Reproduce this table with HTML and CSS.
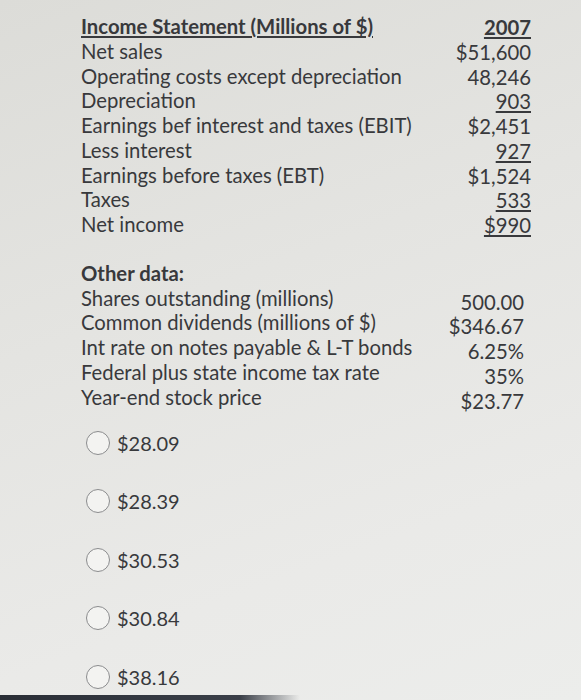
FILE: index.html
```html
<!DOCTYPE html>
<html>
<head>
<meta charset="utf-8">
<link rel="stylesheet" href="styles.css">
</head>
<body>
<div class="page">
  <section class="block">
    <div class="labels">
      <div class="b u">Income Statement (Millions of $)</div>
      <div>Net sales</div>
      <div>Operating costs except depreciation</div>
      <div>Depreciation</div>
      <div>Earnings bef interest and taxes (EBIT)</div>
      <div>Less interest</div>
      <div>Earnings before taxes (EBT)</div>
      <div>Taxes</div>
      <div>Net income</div>
    </div>
    <div class="values v1">
      <div><span class="b u">2007</span></div>
      <div>$51,600</div>
      <div>48,246</div>
      <div><span class="u">903</span></div>
      <div>$2,451</div>
      <div><span class="u">927</span></div>
      <div>$1,524</div>
      <div><span class="u">533</span></div>
      <div><span class="u">$990</span></div>
    </div>
  </section>

  <section class="block other">
    <div class="labels">
      <div class="b">Other data:</div>
      <div>Shares outstanding (millions)</div>
      <div>Common dividends (millions of $)</div>
      <div>Int rate on notes payable &amp; L-T bonds</div>
      <div>Federal plus state income tax rate</div>
      <div>Year-end stock price</div>
    </div>
    <div class="values v2">
      <div>&nbsp;</div>
      <div>500.00</div>
      <div>$346.67</div>
      <div>6.25%</div>
      <div>35%</div>
      <div>$23.77</div>
    </div>
  </section>

  <ul class="options">
    <li><span class="radio"></span><span>$28.09</span></li>
    <li><span class="radio"></span><span>$28.39</span></li>
    <li><span class="radio"></span><span>$30.53</span></li>
    <li><span class="radio"></span><span>$30.84</span></li>
    <li><span class="radio"></span><span>$38.16</span></li>
  </ul>
</div>
<div class="bottombar"></div>
</body>
</html>
```

FILE: styles.css
```css
html, body {
  margin: 0;
  padding: 0;
  height: 700px;
  overflow: hidden;
}
body {
  background: linear-gradient(160deg, #dcdcd8 0%, #e4e4e1 40%, #eaeae8 75%, #ecedeb 100%);
  font-family: Lato, "Open Sans", sans-serif;
  color: #38393c;
  position: relative;
}
.page {
  padding: 14px 50px 0 81px;
}
.block {
  display: flex;
  justify-content: space-between;
  font-size: 20.3px;
  line-height: 24.75px;
}
.values {
  text-align: right;
}
.v1 { padding-top: 1px; }
.v2 { padding-top: 4px; padding-right: 7px; }
.b { font-weight: bold; }
.u {
  text-decoration: underline;
  text-decoration-thickness: 1.5px;
  text-underline-offset: 2px;
}
.other {
  margin-top: 23px;
}
.options {
  list-style: none;
  margin: 0;
  padding: 0 0 0 5px;
  font-size: 20px;
}
.options li {
  display: flex;
  align-items: center;
  gap: 7px;
  height: 58.5px;
}
.radio {
  width: 24px;
  height: 24px;
  border: 1.5px solid #8b8c8e;
  border-radius: 50%;
  background: #f3f3f1;
  box-sizing: border-box;
}
.bottombar {
  position: absolute;
  left: 0;
  bottom: 0;
  width: 300px;
  height: 5px;
  background: linear-gradient(90deg, #2a2e36 0%, #3a3f48 80%, rgba(60,64,72,0) 100%);
}
```
